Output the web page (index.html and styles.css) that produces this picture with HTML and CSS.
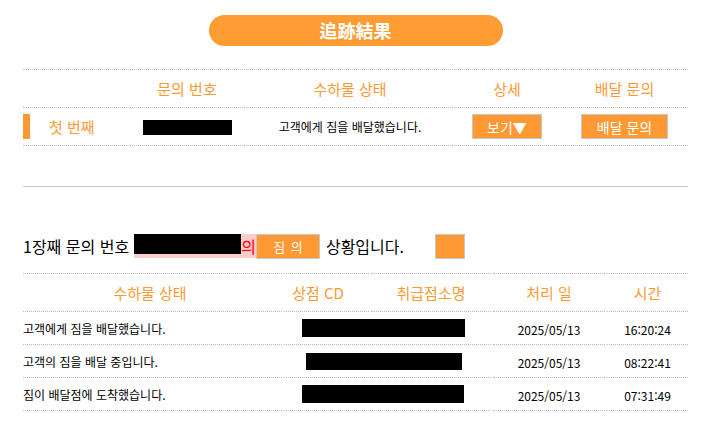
FILE: index.html
```html
<!DOCTYPE html>
<html lang="ko">
<head>
<meta charset="utf-8">
<title>追跡結果</title>
<link rel="stylesheet" href="styles.css">
</head>
<body>
<div class="page">
  <div class="title">追跡結果</div>

  <div class="t1">
    <div class="h"></div>
    <div class="h">문의 번호</div>
    <div class="h">수하물 상태</div>
    <div class="h">상세</div>
    <div class="h">배달 문의</div>

    <div class="d first"><span class="bar"></span><span class="lbl">첫 번째</span></div>
    <div class="d"><span class="redact r0"></span></div>
    <div class="d small">고객에게 짐을 배달했습니다.</div>
    <div class="d"><button class="btn b-see">보기▼</button></div>
    <div class="d"><button class="btn b-ask">배달 문의</button></div>
  </div>

  <div class="sep"></div>

  <div class="line2">
    <span class="lead">1장째 문의 번호</span>
    <span class="mark"><span class="redact r4"></span><span class="red">의</span></span>
    <button class="btn b-jim">짐 의</button>
    <span class="tail">상황입니다.</span>
    <span class="sq"></span>
  </div>

  <div class="t2">
    <div class="h h-st">수하물 상태</div>
    <div class="h h-cd">상점 CD</div>
    <div class="h">취급점소명</div>
    <div class="h">처리 일</div>
    <div class="h">시간</div>

    <div class="d left small">고객에게 짐을 배달했습니다.</div>
    <div class="d span2"><span class="redact r1"></span></div>
    <div class="d num">2025/05/13</div>
    <div class="d num">16:20:24</div>

    <div class="d left small">고객의 짐을 배달 중입니다.</div>
    <div class="d span2"><span class="redact r2"></span></div>
    <div class="d num">2025/05/13</div>
    <div class="d num">08:22:41</div>

    <div class="d left small">짐이 배달점에 도착했습니다.</div>
    <div class="d span2"><span class="redact r3"></span></div>
    <div class="d num">2025/05/13</div>
    <div class="d num">07:31:49</div>
  </div>
</div>
</body>
</html>
```

FILE: styles.css
```css
* { box-sizing: border-box; }
body {
  margin: 0;
  background: #fff;
  font-family: "Noto Sans CJK KR", "Noto Sans", sans-serif;
  color: #000;
}
.page {
  padding: 15px 28px 0 23px;
  width: 716px;
}
.title {
  width: 294px;
  height: 31px;
  margin: 0 auto;
  border-radius: 16px;
  background: #ff9c33;
  color: #fff;
  font-family: "Noto Sans CJK JP", "Noto Sans CJK KR", sans-serif;
  font-weight: bold;
  font-size: 18px;
  line-height: 31px;
  text-align: center;
}
.t1 {
  margin-top: 23px;
  display: grid;
  grid-template-columns: 104px 116px 206px 104px 127px;
  column-gap: 2px;
}
.t2 {
  margin-top: 14px;
  display: grid;
  grid-template-columns: 259px 85px 120px 112px 81px;
  column-gap: 2px;
}
.h {
  height: 39px;
  border-top: 1px dotted #bbb;
  border-bottom: 1px dotted #bbb;
  color: #ff9933;
  font-size: 15px;
  display: flex;
  align-items: center;
  justify-content: center;
  line-height: 20px;
}
.d {
  height: 38px;
  border-bottom: 1px dotted #bbb;
  display: flex;
  align-items: center;
  justify-content: center;
  font-size: 15px;
  line-height: 20px;
}
.t2 .d { height: 33px; }
.small { font-size: 12px; }
.num { font-size: 12px; padding-top: 3px; }
.left { justify-content: flex-start; padding-top: 2px; }
.h-st { padding-right: 5px; }
.h-cd { padding-right: 17px; }
.span2 { grid-column: span 2; justify-content: flex-start; }
.first { justify-content: flex-start; }
.bar {
  width: 7px;
  height: 25px;
  background: #ff9933;
}
.lbl {
  color: #ff9933;
  margin-left: 19px;
}
.redact { display: block; background: #000; }
.r0 { width: 89px; height: 15px; margin-top: 1px; }
.r1 { width: 163px; height: 18px; margin-left: 18px; }
.r2 { width: 156px; height: 17px; margin-left: 22px; }
.r3 { width: 162px; height: 18px; margin-left: 18px; }
.r4 { width: 107px; height: 20px; }
.btn {
  display: flex;
  align-items: center;
  justify-content: center;
  height: 25px;
  padding: 0;
  border: 1px solid #c8c8c8;
  background: #ff9933;
  color: #fff;
  font-family: "Noto Sans CJK KR", sans-serif;
  font-size: 14px;
  line-height: 20px;
}
.b-see { width: 70px; }
.b-ask { width: 87px; }
.b-jim { width: 64px; font-size: 13px; letter-spacing: 1px; padding-left: 1px; margin-right: 6px; }
.sep {
  margin-top: 40px;
  height: 1px;
  background: #ccc;
}
.line2 {
  margin-top: 47px;
  height: 25px;
  display: flex;
  align-items: flex-start;
  font-size: 16px;
  line-height: 25px;
}
.lead { margin-right: 5px; }
.mark {
  display: flex;
  align-items: flex-start;
  height: 24px;
  background: #ffcccc;
}
.red { color: #ff0000; line-height: 24px; }
.tail { margin-right: 31px; }
.sq {
  width: 30px;
  height: 25px;
  border: 1px solid #c8c8c8;
  background: #ff9933;
}
```
